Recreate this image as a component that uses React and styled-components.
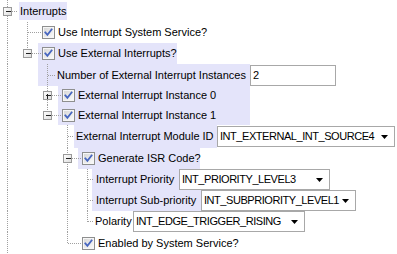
import styled, { createGlobalStyle } from 'styled-components'

const GlobalStyle = createGlobalStyle`
  html, body {
    margin: 0;
    padding: 0;
    background: #fff;
    overflow: hidden;
  }
  body {
    font-family: "Liberation Sans", Arial, sans-serif;
    font-size: 11px;
    color: #000;
  }
`

const LINE = '#a0a0a0'
const HILITE = '#e4e4fa'

// d = depth, cx of connector = 7 + 20 * d
const rows = [
  { d: 0, h: 22, exp: '-', down: true, rails: [], label: 'Interrupts', band: [19, 67], bandH: 18, start: 20 },
  { d: 1, h: 21, check: true, down: true, rails: [0], label: 'Use Interrupt System Service?', start: 42 },
  { d: 1, h: 21, exp: '-', check: true, rails: [0], label: 'Use External Interrupts?', band: [38, 177], start: 42 },
  { d: 2, h: 22, down: true, rails: [0], label: 'Number of External Interrupt Instances', band: [38, 250], start: 57, input: { value: '2', width: 86 } },
  { d: 2, h: 19, exp: '+', check: true, down: true, rails: [0], label: 'External Interrupt Instance 0', band: [58, 250], start: 62 },
  { d: 2, h: 20, exp: '-', check: true, rails: [0], label: 'External Interrupt Instance 1', band: [58, 250], start: 62 },
  { d: 3, h: 23, down: true, rails: [0], label: 'External Interrupt Module ID', band: [74, 217], start: 76, combo: { value: 'INT_EXTERNAL_INT_SOURCE4', width: 178 } },
  { d: 3, h: 21, exp: '-', check: true, down: true, rails: [0], label: 'Generate ISR Code?', band: [78, 200], start: 82 },
  { d: 4, h: 21, down: true, rails: [0, 3], label: 'Interrupt Priority', band: [92, 179], start: 96, combo: { value: 'INT_PRIORITY_LEVEL3', width: 151 } },
  { d: 4, h: 21, down: true, rails: [0, 3], label: 'Interrupt Sub-priority', band: [92, 201], start: 96, combo: { value: 'INT_SUBPRIORITY_LEVEL1', width: 155 } },
  { d: 4, h: 21, rails: [0, 3], label: 'Polarity', band: [94, 133], plain: true, start: 95, combo: { value: 'INT_EDGE_TRIGGER_RISING', width: 172 } },
  { d: 3, h: 22, check: true, rails: [0], label: 'Enabled by System Service?', start: 82 },
]

function Guides({ row }) {
  const { d, h, rails, exp, down, check, start } = row
  const cx = 7 + 20 * d + 0.5
  const cy = Math.floor(h / 2) + 0.5
  const hEnd = check ? start - 1 : start - 2
  return (
    <GuideSvg width="110" height={h}>
      <g stroke={LINE} strokeDasharray="1 1" shapeRendering="crispEdges">
        {rails.map(l => (
          <line key={l} x1={7 + 20 * l + 0.5} y1="0" x2={7 + 20 * l + 0.5} y2={h} />
        ))}
        <line x1={cx} y1="0" x2={cx} y2={down ? h : cy} />
        <line x1={cx} y1={cy} x2={hEnd} y2={cy} />
      </g>
      {exp && (
        <g shapeRendering="crispEdges">
          <rect x={cx - 4} y={cy - 4} width="8" height="8" fill="url(#expFill)" stroke="#9a9a9a" />
          <line x1={cx - 2} y1={cy} x2={cx + 3} y2={cy} stroke="#222" />
          {exp === '+' && <line x1={cx} y1={cy - 2} x2={cx} y2={cy + 3} stroke="#222" />}
        </g>
      )}
    </GuideSvg>
  )
}

function Check() {
  return (
    <CheckSvg width="13" height="13" viewBox="0 0 13 13">
      <rect x="0.5" y="0.5" width="12" height="12" fill="#f0f0f0" stroke="#8e8f8f" shapeRendering="crispEdges" />
      <rect x="1.5" y="1.5" width="10" height="10" fill="url(#chkFill)" stroke="#f6f6f6" shapeRendering="crispEdges" />
      <path d="M3.3 6.4 L5.4 8.9 L9.6 3.4" fill="none" stroke="#4766c0" strokeWidth="1.8" strokeLinecap="square" />
    </CheckSvg>
  )
}

function Arrow() {
  return (
    <ArrowSvg width="7" height="4" viewBox="0 0 7 4">
      <path d="M0 0 H7 L3.5 4 Z" fill="#000" />
    </ArrowSvg>
  )
}

function TreeRow({ row }) {
  const hl = !!row.band && !row.plain
  const bandStart = row.band ? row.band[0] : row.start
  const bandWidth = row.band ? row.band[1] - row.band[0] : undefined
  return (
    <Row $h={row.h} $indent={bandStart}>
      <Band $hl={hl} $w={bandWidth} $bh={row.bandH} $pad={row.start - bandStart}>
        {row.check && <Check />}
        <Label>{row.label}</Label>
      </Band>
      {row.input && <TextBox $w={row.input.width}>{row.input.value}</TextBox>}
      {row.combo && (
        <Combo $w={row.combo.width}>
          <ComboText>{row.combo.value}</ComboText>
          <Arrow />
        </Combo>
      )}
      <Guides row={row} />
    </Row>
  )
}

export default function App() {
  return (
    <>
      <GlobalStyle />
      <svg width="0" height="0" style={{ position: 'absolute' }}>
        <defs>
          <linearGradient id="chkFill" x1="0" y1="0" x2="1" y2="1">
            <stop offset="0" stopColor="#d6d6d6" />
            <stop offset="1" stopColor="#fbfbfb" />
          </linearGradient>
          <linearGradient id="expFill" x1="0" y1="0" x2="1" y2="1">
            <stop offset="0" stopColor="#ffffff" />
            <stop offset="1" stopColor="#dcdcdc" />
          </linearGradient>
        </defs>
      </svg>
      <Tree>
        {rows.map((row, i) => (
          <TreeRow key={i} row={row} />
        ))}
      </Tree>
    </>
  )
}

const Tree = styled.div`
  width: 397px;
  height: 254px;
  overflow: hidden;
  background: #fff;
`
const Row = styled.div`
  position: relative;
  display: flex;
  align-items: center;
  height: ${p => p.$h}px;
  padding-left: ${p => p.$indent}px;
  box-sizing: border-box;
`
const Band = styled.div`
  flex: none;
  display: flex;
  align-items: center;
  box-sizing: border-box;
  height: ${p => (p.$bh ? `${p.$bh}px` : '100%')};
  width: ${p => (p.$w ? `${p.$w}px` : 'auto')};
  padding-left: ${p => p.$pad}px;
  background: ${p => (p.$hl ? HILITE : 'transparent')};
  white-space: nowrap;
`
const Label = styled.span`
  line-height: 13px;
`
const CheckSvg = styled.svg`
  flex: none;
  margin-right: 3px;
`
const GuideSvg = styled.svg`
  position: absolute;
  left: 0;
  top: 0;
  pointer-events: none;
`
const TextBox = styled.div`
  flex: none;
  box-sizing: border-box;
  width: ${p => p.$w}px;
  height: 21px;
  border: 1px solid #a8a8a8;
  background: #fff;
  padding-left: 2px;
  display: flex;
  align-items: center;
  line-height: 13px;
`
const Combo = styled.div`
  flex: none;
  box-sizing: border-box;
  width: ${p => p.$w}px;
  height: 21px;
  border: 1px solid #a8a8a8;
  background: #fff;
  padding: 0 6px 0 2px;
  display: flex;
  align-items: center;
  justify-content: space-between;
`
const ComboText = styled.span`
  line-height: 13px;
  letter-spacing: -0.45px;
  white-space: nowrap;
`
const ArrowSvg = styled.svg`
  flex: none;
  margin-top: 1px;
`
